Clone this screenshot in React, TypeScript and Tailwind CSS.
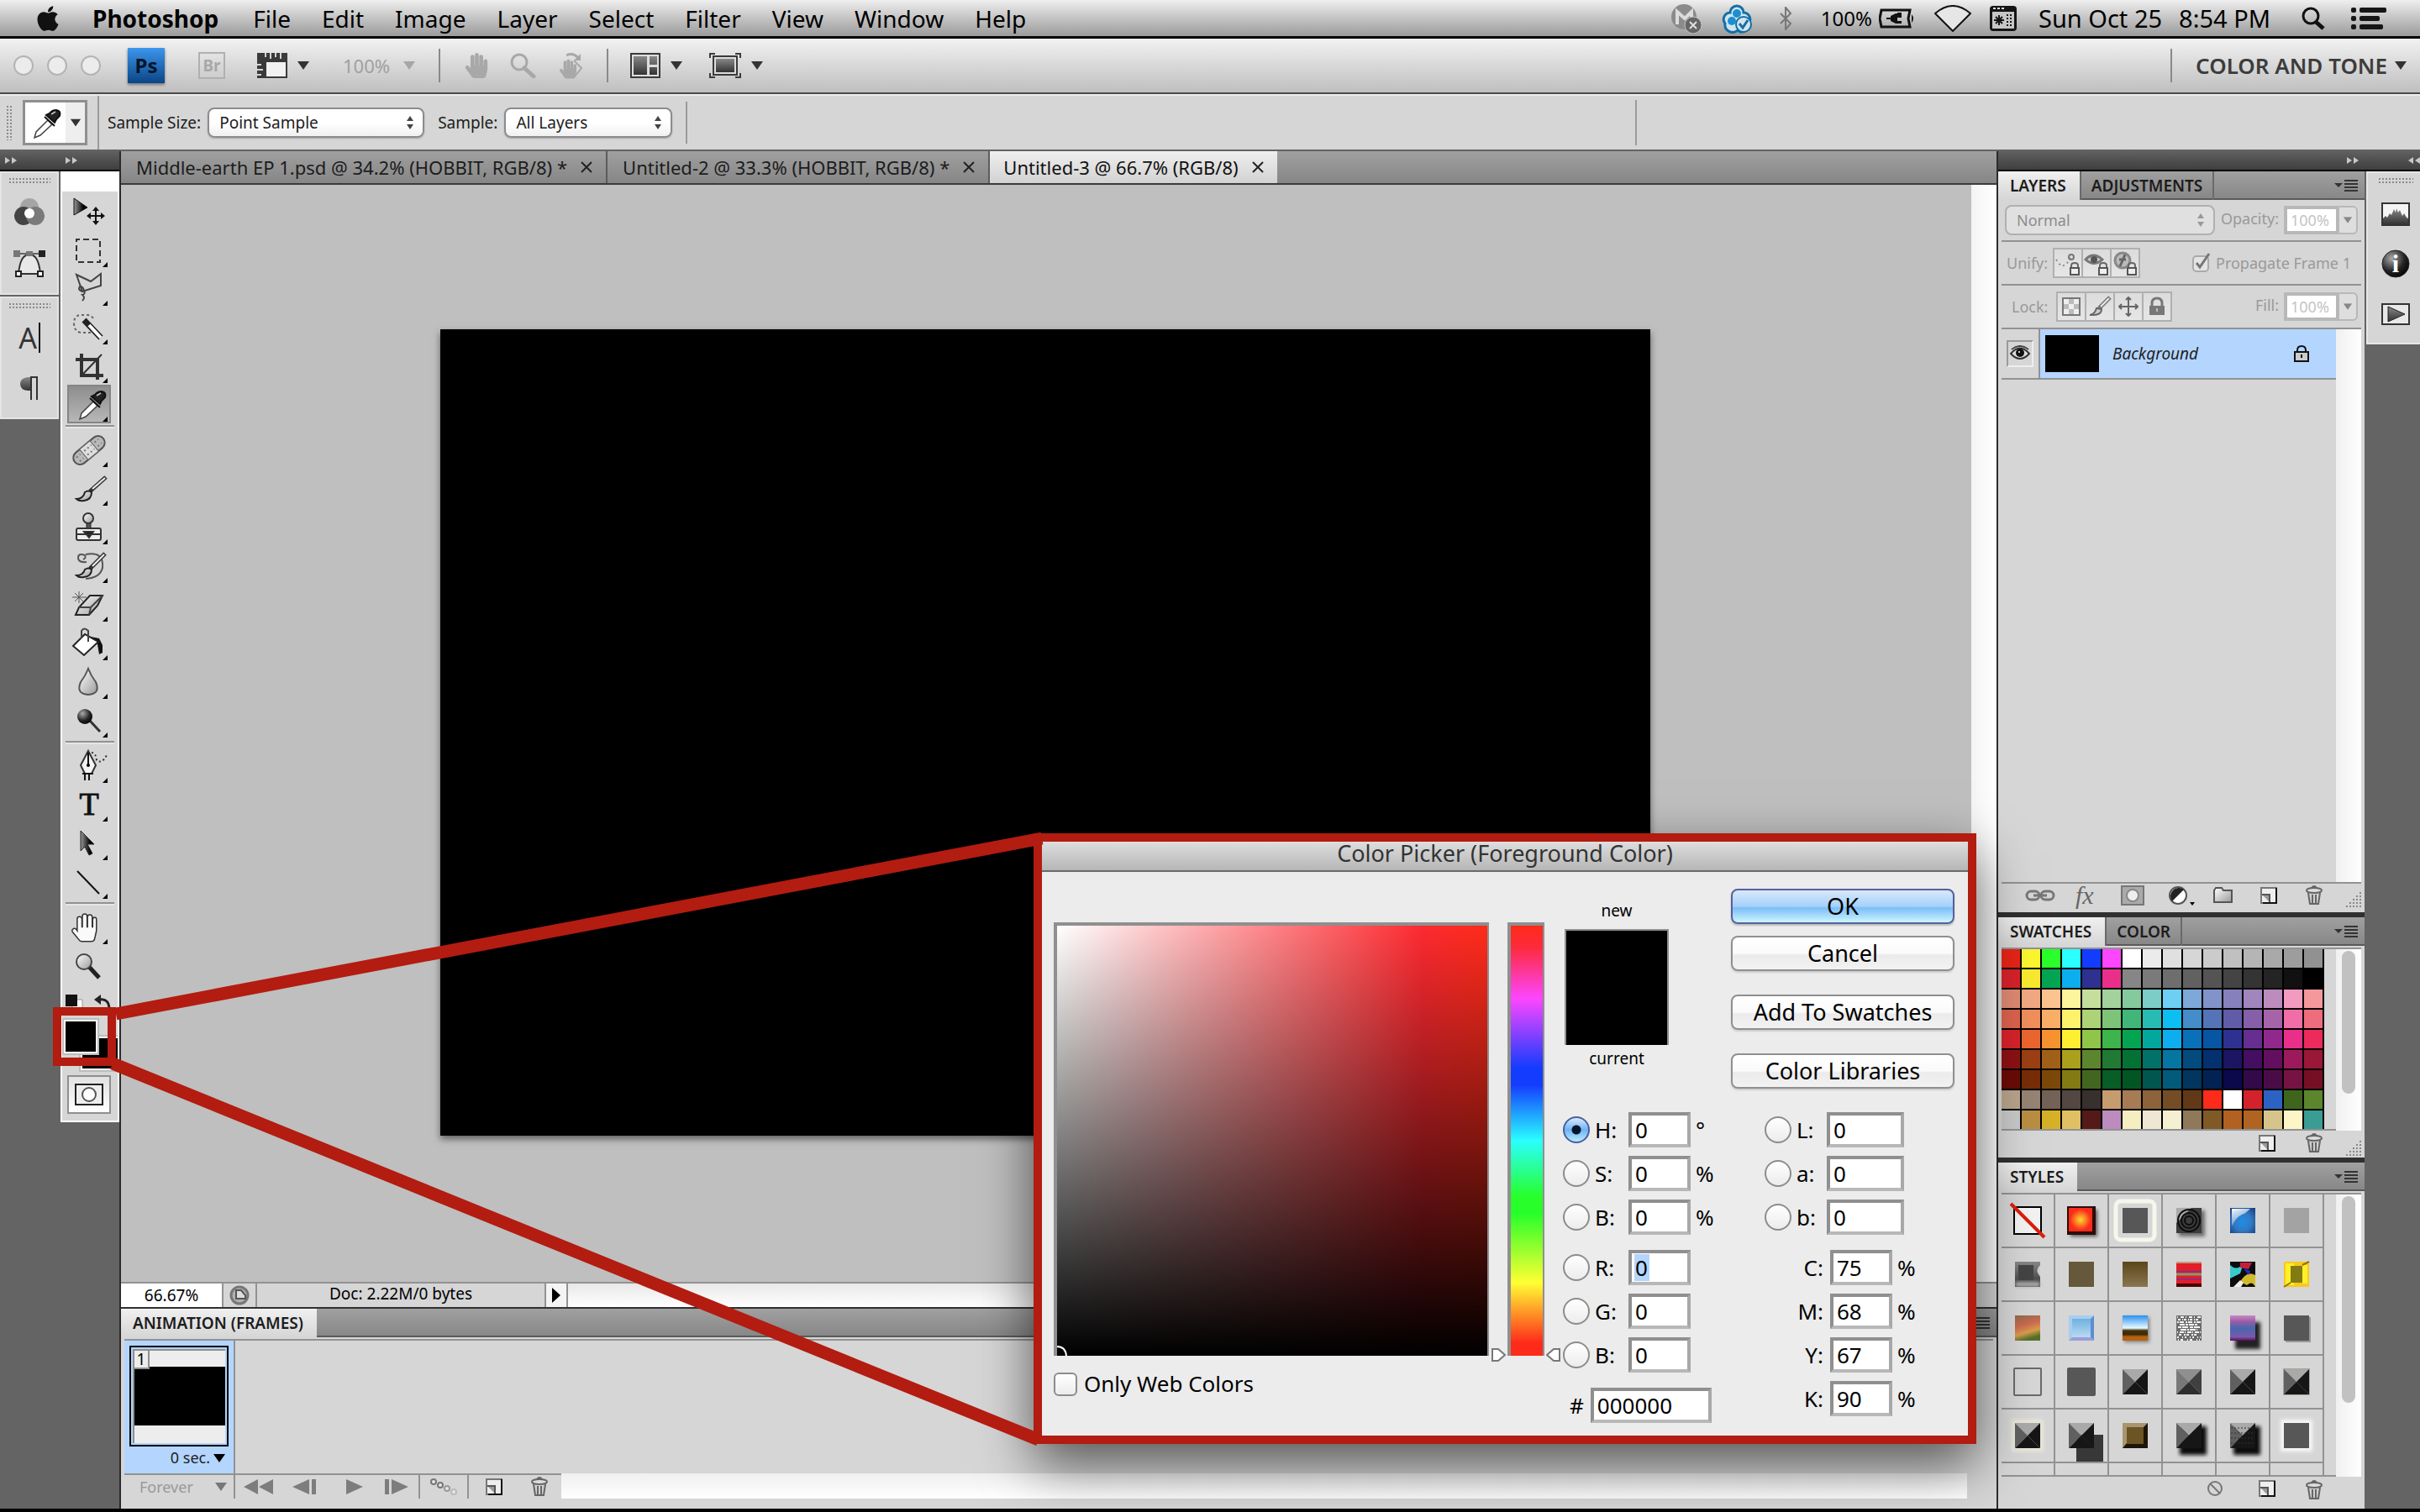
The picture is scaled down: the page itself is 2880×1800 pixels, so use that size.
import type { ReactNode } from "react";
import { FaApple, FaHandPaper } from "react-icons/fa";

const menus = ["File", "Edit", "Image", "Layer", "Select", "Filter", "View", "Window", "Help"];

const documents = [
  { name: "Middle-earth EP 1.psd @ 34.2% (HOBBIT, RGB/8) *", active: false },
  { name: "Untitled-2 @ 33.3% (HOBBIT, RGB/8) *", active: false },
  { name: "Untitled-3 @ 66.7% (RGB/8)", active: true },
];

const swatches = [
  ["#e82517", "#fbf531", "#2aff2b", "#2bffff", "#143cff", "#fd46ff", "#ffffff", "#ebebeb", "#e0e0e0", "#d6d6d6", "#cbcbcb", "#c0c0c0", "#b5b5b5", "#a9a9a9", "#9d9d9d", "#919191"],
  ["#d8222a", "#f8e92f", "#04a552", "#0daeef", "#2e3190", "#ea2f8b", "#868686", "#7a7a7a", "#6e6e6e", "#616161", "#545454", "#444444", "#343434", "#242424", "#111111", "#000000"],
  ["#df8a73", "#f0a983", "#fbc48e", "#fef49c", "#c4df9c", "#a3d39c", "#84ca9d", "#7cccc7", "#6ecff5", "#7ea8d8", "#8293ca", "#8681bc", "#a085be", "#bc8cbf", "#f39ac1", "#f4989c"],
  ["#dd634d", "#f08e5c", "#f9ad66", "#fef26c", "#acd376", "#7dc479", "#40b779", "#28bbb3", "#0cbef1", "#458dca", "#5574b8", "#605ca7", "#855fa8", "#a763a8", "#f06da8", "#ef6c7d"],
  ["#d8222a", "#ec652f", "#f6932f", "#fef031", "#8fc649", "#3eb44c", "#04a552", "#02a89e", "#0daeef", "#0971ba", "#0756a4", "#2e3190", "#652e90", "#91288e", "#ea2f8b", "#ec2a5b"],
  ["#8c1114", "#9c3f14", "#a16018", "#aaa01c", "#5c862d", "#207a33", "#047135", "#027168", "#0576a2", "#034b7e", "#03316f", "#1b1562", "#440e61", "#620f5f", "#9c195c", "#9b1738"],
  ["#690b06", "#762d08", "#7b4809", "#837a14", "#42661f", "#085e26", "#025624", "#01564e", "#035a7b", "#02365e", "#022253", "#0b084b", "#320a48", "#4a0c47", "#771344", "#770f24"],
  ["#b8a48c", "#958373", "#736257", "#534741", "#37302d", "#c69c6e", "#a67c55", "#8c633b", "#744d27", "#613917", "#fe2b1b", "#ffffff", "#d4222c", "#2d62c5", "#3f651d", "#5c862d"],
  ["#c9c9c9", "#b98e42", "#d6b128", "#dfc164", "#541919", "#bc8cbf", "#f6eec1", "#ede7d4", "#f6f0d2", "#90795a", "#7f5a27", "#b16122", "#b16422", "#d6c48a", "#fdf5c5", "#3a9d93"],
];

/* Shared gradients used by the drawings below. */
function Defs() {
  return (
    <svg className="absolute h-0 w-0" aria-hidden="true">
      <defs>
        <linearGradient id="steel" x1="0" y1="0" x2="1" y2="1">
          <stop offset="0" stopColor="#ffffff" />
          <stop offset="1" stopColor="#9a9a9a" />
        </linearGradient>
        <linearGradient id="dark" x1="0" y1="0" x2="0" y2="1">
          <stop offset="0" stopColor="#888888" />
          <stop offset="1" stopColor="#333333" />
        </linearGradient>
        <linearGradient id="darkX" x1="0" y1="0" x2="1" y2="0">
          <stop offset="0" stopColor="#999999" />
          <stop offset="0.7" stopColor="#000000" />
        </linearGradient>
        <radialGradient id="ball" cx="0.35" cy="0.3" r="0.8">
          <stop offset="0" stopColor="#aaaaaa" />
          <stop offset="0.6" stopColor="#222222" />
          <stop offset="1" stopColor="#000000" />
        </radialGradient>
        <radialGradient id="fire">
          <stop offset="0" stopColor="#ffd92e" />
          <stop offset="0.9" stopColor="#fb2a1a" />
        </radialGradient>
        <radialGradient id="gem" cx="0.5" cy="0.55" r="0.7">
          <stop offset="0" stopColor="#1c8fe4" />
          <stop offset="0.5" stopColor="#3279c4" />
          <stop offset="1" stopColor="#16407e" />
        </radialGradient>
        <linearGradient id="shine" x1="0" y1="0" x2="0.5" y2="1">
          <stop offset="0" stopColor="#ffffff" />
          <stop offset="1" stopColor="#ffffff" stopOpacity="0.1" />
        </linearGradient>
        <linearGradient id="brown" x1="0" y1="0" x2="0" y2="1">
          <stop offset="0" stopColor="#5b451a" />
          <stop offset="1" stopColor="#8a7750" />
        </linearGradient>
        <linearGradient id="sunset" x1="0" y1="0" x2="0.3" y2="1">
          <stop offset="0" stopColor="#8d6a4a" />
          <stop offset="0.45" stopColor="#cb6a50" />
          <stop offset="0.75" stopColor="#d89c4c" />
          <stop offset="1" stopColor="#56702a" />
        </linearGradient>
        <linearGradient id="ice" x1="0" y1="0" x2="0" y2="1">
          <stop offset="0" stopColor="#6fb1e0" />
          <stop offset="1" stopColor="#b9d9f2" />
        </linearGradient>
        <linearGradient id="chrome" x1="0" y1="0" x2="0" y2="1">
          <stop offset="0" stopColor="#2a8ff0" />
          <stop offset="0.5" stopColor="#e9fbff" />
          <stop offset="0.6" stopColor="#45340e" />
          <stop offset="0.75" stopColor="#3c2a08" />
          <stop offset="0.85" stopColor="#b7620f" />
          <stop offset="1" stopColor="#b7620f" />
        </linearGradient>
        <linearGradient id="violet" x1="0" y1="0" x2="0" y2="1">
          <stop offset="0" stopColor="#c58ac4" />
          <stop offset="0.25" stopColor="#9b5aa6" />
          <stop offset="0.5" stopColor="#4668ac" />
          <stop offset="0.85" stopColor="#7a58ac" />
          <stop offset="1" stopColor="#5a0c58" />
        </linearGradient>
        <filter id="soft" x="-50%" y="-50%" width="200%" height="200%">
          <feGaussianBlur stdDeviation="2" />
        </filter>
      </defs>
    </svg>
  );
}

function Caret({ className = "text-[#333]" }: { className?: string }) {
  return (
    <svg className={`h-[10px] w-[14px] shrink-0 ${className}`} viewBox="0 0 14 10" fill="currentColor">
      <path d="M0 0h14L7 10z" />
    </svg>
  );
}

function UpDown({ className }: { className: string }) {
  return (
    <svg className={`pointer-events-none absolute right-3 top-[10px] h-4 w-[10px] ${className}`} viewBox="0 0 10 16" fill="currentColor">
      <path d="M5 0l4 6H1zM5 16l4-6H1z" />
    </svg>
  );
}

function Chevrons({ left = false }: { left?: boolean }) {
  return (
    <svg className="h-2 w-[14px] text-[#c8c8c8]" viewBox="0 0 14 8" fill="currentColor">
      <path d={left ? "M6 0v8L0 4zM14 0v8L8 4z" : "M0 0v8l6-4zM8 0v8l6-4z"} />
    </svg>
  );
}

function Grip() {
  return <div className="mx-2 h-2 bg-[radial-gradient(#8a8a8a_1px,transparent_1px)] bg-[length:4px_4px]" />;
}

function MenuBar() {
  return (
    <header className="flex h-[46px] items-center border-b-[3px] border-black bg-linear-to-b from-[#efefef] to-[#9b9b9b] pl-10 pr-10 text-[28px] text-black">
      <FaApple className="size-[34px] text-[#111]" />
      <nav className="ml-9 flex items-center gap-[37px]">
        <button className="mr-1 font-bold">Photoshop</button>
        {menus.map((m) => (
          <button key={m}>{m}</button>
        ))}
      </nav>
      <div className="ml-auto flex items-center">
        <svg className="h-9 w-9" viewBox="0 0 36 36">
          <circle cx="15" cy="16" r="15" fill="#8b8b8b" />
          <path d="M7 25V10l9 8 8-8v6" fill="none" stroke="#dcdcdc" strokeWidth="4" />
          <circle cx="26" cy="26" r="10" fill="#666" stroke="#c4c4c4" strokeWidth="1" />
          <path d="M22 22l8 8M30 22l-8 8" stroke="#e0e0e0" strokeWidth="2" />
        </svg>
        <svg className="ml-6 h-9 w-9" viewBox="0 0 36 36" fill="#d3e4ef" stroke="#146fa6" strokeWidth="3">
          <path d="M10 11a8 8 0 0 1 16 0a8 8 0 0 1 6 13a8 8 0 0 1-13 8a9 9 0 0 1-15-8a8 8 0 0 1 6-13z" />
          <circle cx="18" cy="12" r="5" fill="#1b8fd0" stroke="none" />
          <circle cx="12" cy="21" r="5" fill="#1b8fd0" stroke="none" />
          <circle cx="26" cy="25" r="9" strokeWidth="2" />
          <path d="M21 24l4 5 6-9" fill="none" />
        </svg>
        <svg className="ml-8 h-7 w-4" viewBox="0 0 16 28" fill="none" stroke="#777" strokeWidth="2">
          <path d="M2 8l12 12-6 7V1l6 7L2 20" />
        </svg>
        <span className="ml-[34px] text-[24px]">100%</span>
        <svg className="ml-2 h-6 w-[42px]" viewBox="0 0 42 24">
          <path d="M3 2h34l-2 10 2 10H3l-2-10z" fill="none" stroke="#111" strokeWidth="3" />
          <path d="M9 11h5V9l6-3h2V5h5v3h-5v1-1h5v3h-5v4h5v3h-7l-6-3v-2H9z" fill="#111" />
          <path d="M39 7q4 5 0 10z" fill="#111" />
        </svg>
        <svg className="ml-6 h-8 w-11" viewBox="0 0 44 32" fill="#e6e6e6" stroke="#111" strokeWidth="2">
          <path d="M1 10Q22-8 43 10L22 31z" />
        </svg>
        <svg className="ml-[22px] h-[30px] w-8" viewBox="0 0 32 30">
          <rect width="32" height="30" rx="4" fill="#151515" />
          <path d="M4 3h3M9 3h3M14 3h3" stroke="#ddd" strokeWidth="2" />
          <rect x="3" y="7" width="26" height="20" fill="#c6c6c6" />
          <path d="M11 11v12M5 17h12M7 13l8 8M15 13l-8 8" stroke="#151515" strokeWidth="2" />
          <path d="M21 10v14M25 10v14" stroke="#151515" strokeWidth="2" strokeDasharray="2 2" />
        </svg>
        <span className="ml-[26px] text-[29px]">Sun Oct 25</span>
        <span className="ml-5 text-[29px]">8:54 PM</span>
        <svg className="ml-9 h-7 w-[30px]" viewBox="0 0 30 28" fill="none" stroke="#111">
          <circle cx="12" cy="11" r="9" strokeWidth="3" />
          <path d="M18 18l9 8" strokeWidth="5" />
        </svg>
        <svg className="ml-[30px] h-[26px] w-[42px]" viewBox="0 0 42 26" fill="#151515">
          <rect width="6" height="6" rx="2" />
          <rect y="10" width="6" height="6" rx="2" />
          <rect y="20" width="6" height="6" rx="2" />
          <rect x="10" width="32" height="6" rx="2" />
          <rect x="10" y="10" width="24" height="6" rx="2" />
          <rect x="10" y="20" width="28" height="6" rx="2" />
        </svg>
      </div>
    </header>
  );
}

function BarDivider() {
  return <div className="h-10 w-[2px] bg-[#8a8a8a]" />;
}

function AppBar() {
  return (
    <div className="flex h-[66px] items-center border-b-2 border-[#4a4a4a] bg-linear-to-b from-[#f2f2f2] to-[#bfbfbf] pl-4 pr-4">
      <div className="flex gap-4">
        {["Close", "Minimize", "Zoom"].map((n) => (
          <button key={n} aria-label={n} className="size-6 rounded-full border-2 border-[#b4b4b4] bg-[#ececec]" />
        ))}
      </div>
      <div className="ml-8 flex h-[42px] w-11 items-center justify-center bg-linear-to-b from-[#3d97ee] to-[#0a4586] text-[24px] font-bold text-[#04152b] shadow-[0_2px_3px_#777]">Ps</div>
      <button className="ml-10 flex h-8 w-8 items-center justify-center border-2 border-[#b0b0b0] text-[19px] font-bold text-[#a8a8a8]">Br</button>
      <button aria-label="View extras" className="ml-[38px] flex items-center gap-3">
        <svg className="h-[30px] w-9" viewBox="0 0 36 30">
          <path d="M0 0h36v10H10v20H0z" fill="#3a3a3a" />
          <path d="M10 10h25v19H10z" fill="#f2f2f2" stroke="#3a3a3a" strokeWidth="2" />
          <path d="M10 0v5M16 0v7M22 0v5M28 0v7M0 14h5M0 20h7M0 26h5" stroke="#d4d4d4" strokeWidth="2" />
        </svg>
        <Caret />
      </button>
      <button className="ml-10 mr-7 flex items-center gap-4 text-[22px] text-[#a0a0a0]">
        100% <Caret className="text-[#a6a6a6]" />
      </button>
      <BarDivider />
      <div className="ml-7 mr-6 flex items-center gap-6 text-[#a8a8a8]">
        <button aria-label="Hand tool">
          <FaHandPaper className="h-[30px] w-[30px]" />
        </button>
        <button aria-label="Zoom tool">
          <svg className="h-[30px] w-8" viewBox="0 0 32 30" fill="none" stroke="currentColor">
            <circle cx="12" cy="11" r="9" strokeWidth="3" />
            <path d="M18 18l11 10" strokeWidth="5" strokeLinecap="round" />
          </svg>
        </button>
        <button aria-label="Rotate view" className="mx-1 flex items-end">
          <FaHandPaper className="h-6 w-5" />
          <svg className="-ml-3 h-8 w-5" viewBox="0 0 20 32" fill="none" stroke="currentColor" strokeWidth="2">
            <path d="M0 4q8-4 14 3" strokeWidth="3" />
            <path d="M17 2v8H9z" fill="currentColor" stroke="none" />
            <path d="M9 10l9 9-8 10" />
          </svg>
        </button>
      </div>
      <BarDivider />
      <button aria-label="Arrange documents" className="ml-[26px] flex items-center gap-3">
        <svg className="h-[30px] w-9" viewBox="0 0 36 30">
          <rect x="1" y="1" width="34" height="28" fill="#ddd" stroke="#3a3a3a" strokeWidth="2" />
          <path d="M4 4h16v22H4zM23 4h9v10h-9zM23 17h9v9h-9z" fill="url(#dark)" />
        </svg>
        <Caret />
      </button>
      <button aria-label="Screen mode" className="ml-8 flex items-center gap-3">
        <svg className="h-[30px] w-[38px]" viewBox="0 0 38 30">
          <path d="M1 6V1h6M31 1h6v5M37 24v5h-6M7 29H1v-5" fill="none" stroke="#3a3a3a" strokeWidth="2" />
          <rect x="5" y="4" width="28" height="22" fill="#ddd" stroke="#3a3a3a" strokeWidth="2" />
          <rect x="8" y="7" width="22" height="16" fill="url(#dark)" />
        </svg>
        <Caret />
      </button>
      <div className="ml-auto flex items-center">
        <BarDivider />
        <button className="ml-7 flex items-center gap-[9px] text-[26px] font-semibold text-[#3c3c3c]">
          COLOR AND TONE <Caret />
        </button>
      </div>
    </div>
  );
}

function Dropper() {
  return (
    <>
      <path d="M15 41l2-7 14-14 5 5-14 13z" fill="#fff" stroke="#444" strokeWidth="1.5" />
      <path d="M27 16l12 11M29 14l10 9 2-4 4-4q2-6-4-7-5 0-8 4z" fill="#222" stroke="#111" strokeWidth="2" />
      <path d="M35 13l5-3" stroke="#bbb" strokeWidth="2" />
    </>
  );
}

function OptionsBar() {
  return (
    <div className="flex h-[68px] items-center border-y-2 border-t-[#ececec] border-b-[#636363] bg-[#d6d6d6] pl-[7px] text-[19px] text-[#1c1c1c]">
      <div className="h-[42px] w-2 bg-[radial-gradient(#8a8a8a_1px,transparent_1px)] bg-[length:4px_4px]" />
      <button aria-label="Eyedropper presets" className="ml-3 flex h-[54px] w-[77px] items-center border-[3px] border-[#8f8f8f] bg-white">
        <svg className="-ml-1 h-[46px] w-[52px]" viewBox="0 0 52 46">
          <Dropper />
        </svg>
        <div className="flex h-full w-5 flex-1 items-center justify-center bg-[#eee]">
          <Caret className="scale-90 text-[#333]" />
        </div>
      </button>
      <div className="ml-3 h-full w-[2px] bg-[#9b9b9b]" />
      <label htmlFor="sample-size" className="ml-[10px]">Sample Size:</label>
      <div className="relative ml-2">
        <select id="sample-size" className="h-9 w-[258px] appearance-none rounded-lg border-2 border-[#8c8c8c] bg-linear-to-b from-white from-50% to-[#f0f0f0] pl-3 shadow-[0_1px_2px_#aaa]">
          <option>Point Sample</option>
        </select>
        <UpDown className="text-[#444]" />
      </div>
      <label htmlFor="sample" className="ml-4">Sample:</label>
      <div className="relative ml-2">
        <select id="sample" className="h-9 w-[200px] appearance-none rounded-lg border-2 border-[#8c8c8c] bg-linear-to-b from-white from-50% to-[#f0f0f0] pl-3 shadow-[0_1px_2px_#aaa]">
          <option>All Layers</option>
        </select>
        <UpDown className="text-[#444]" />
      </div>
      <div className="ml-4 h-[50px] w-[2px] bg-[#9b9b9b]" />
      <div className="ml-auto mr-[932px] h-[54px] w-[2px] bg-[#9b9b9b]" />
    </div>
  );
}

type Tool = { name: string; art: ReactNode; flyout?: boolean; selected?: boolean };

const toolGroups: Tool[][] = [
  [
    {
      name: "Move",
      flyout: false,
      art: (
        <>
          <path d="M8 8l16 11L8 28z" fill="url(#darkX)" stroke="#111" />
          <path d="M34 20v18M25 29h18" stroke="#111" strokeWidth="2" />
          <path d="M34 18l4 5h-8zM34 40l4-5h-8zM23 29l5-4v8zM45 29l-5-4v8z" fill="#111" />
        </>
      ),
    },
    { name: "Marquee", art: <path d="M11 11h28v27H11z" fill="none" stroke="#333" strokeWidth="2" strokeDasharray="7 4" strokeDashoffset="3" /> },
    {
      name: "Lasso",
      art: <path d="M11 7l17 8 12-9v14l-22 7zM18 27q-6-2-3-6 4 0 5 5 2 4-2 5 4 3 0 7" fill="none" stroke="#444" strokeWidth="2" />,
    },
    {
      name: "Quick Selection",
      art: (
        <>
          <path d="M28 30H16q-8-2-8-11 0-10 9-10h8q4 1 6 4" fill="none" stroke="#666" strokeWidth="2" strokeDasharray="3 3" />
          <path d="M20 15l20 21" stroke="#222" strokeWidth="7" />
          <path d="M26 21l14 15" stroke="#fff" strokeWidth="4" />
        </>
      ),
    },
    {
      name: "Crop",
      art: (
        <>
          <path d="M17 9v26h26M10 16h26v24" fill="none" stroke="#333" strokeWidth="4" />
          <path d="M19 33L41 10" stroke="#333" strokeWidth="2" />
        </>
      ),
    },
    { name: "Eyedropper", selected: true, art: <Dropper /> },
  ],
  [
    {
      name: "Healing Brush",
      art: (
        <g transform="rotate(-40 26 24)">
          <rect x="4" y="16" width="44" height="16" rx="8" fill="#b9b9b9" stroke="#555" strokeWidth="2" />
          <path d="M18 16h16v16H18z" fill="#dedede" stroke="#666" />
          <path d="M9 21h6M9 27h6M21 21h11M21 27h11M37 21h6M37 27h6" stroke="#777" strokeWidth="2" strokeDasharray="2 3" />
        </g>
      ),
    },
    {
      name: "Brush",
      art: (
        <>
          <path d="M27 27L46 10" stroke="#333" strokeWidth="5" />
          <path d="M30 24L45 11" stroke="#eee" strokeWidth="2" />
          <path d="M11 36q8 0 10-8 4-3 8 0 0 9-9 10-6 1-9-2z" fill="url(#steel)" stroke="#222" strokeWidth="2" />
        </>
      ),
    },
    {
      name: "Clone Stamp",
      art: (
        <>
          <path d="M23 16h5v10h-5z" fill="#555" stroke="#222" />
          <circle cx="25" cy="13" r="6" fill="url(#steel)" stroke="#333" strokeWidth="2" />
          <rect x="11" y="25" width="29" height="14" rx="2" fill="#eee" stroke="#333" strokeWidth="2" />
          <path d="M11 32h29M20 29h11l-5 7z" fill="#111" stroke="#333" strokeWidth="2" />
        </>
      ),
    },
    {
      name: "History Brush",
      art: (
        <>
          <path d="M19 16q4-2 2-5-8-3-8 3 0 6 10 5M22 10q22-4 20 16-3 12-20 13" fill="none" stroke="#555" strokeWidth="2" />
          <path d="M27 27L45 9" stroke="#333" strokeWidth="5" />
          <path d="M30 24L44 10" stroke="#eee" strokeWidth="2" />
          <path d="M11 35q8 0 10-7 4-3 8 0 0 8-9 9-6 1-9-2z" fill="url(#steel)" stroke="#222" strokeWidth="2" />
        </>
      ),
    },
    {
      name: "Eraser",
      art: (
        <>
          <path d="M10 36l4-9 13-14h15l-6 12-10 11z" fill="url(#steel)" stroke="#222" strokeWidth="2" />
          <path d="M14 27h14l14-14M28 27l-2 9" fill="none" stroke="#444" strokeWidth="2" />
          <path d="M6 15h17M14 8v14M9 10l10 10M19 10L9 20" stroke="#555" />
        </>
      ),
    },
    {
      name: "Paint Bucket",
      art: (
        <>
          <path d="M38 18l4 8v9l-4 2-2-12-8-9z" fill="#111" />
          <path d="M7 27l14-14 16 9-17 16z" fill="#fff" stroke="#222" strokeWidth="2" />
          <path d="M17 18V9q3-5 8 0v13" fill="none" stroke="#444" strokeWidth="2" />
        </>
      ),
    },
    { name: "Blur", art: <path d="M25 8q3 8 9 16 6 14-9 15-15-1-9-15 6-8 9-16z" fill="url(#steel)" stroke="#555" strokeWidth="2" /> },
    {
      name: "Dodge",
      art: (
        <>
          <path d="M27 24l12 13" stroke="#333" strokeWidth="3" />
          <circle cx="21" cy="19" r="9" fill="url(#ball)" />
        </>
      ),
    },
  ],
  [
    {
      name: "Pen",
      art: (
        <>
          <path d="M25 6l9 17-5 10h-8l-5-10z" fill="#f4f4f4" stroke="#333" strokeWidth="2" />
          <path d="M25 8v14M18 33h13M21 34v7M26 34v7" stroke="#111" strokeWidth="2" />
          <circle cx="25" cy="23" r="2" fill="#000" />
          <path d="M29 8q5 0 6 9 6 5 12-6" fill="none" stroke="#333" strokeWidth="2" strokeDasharray="2 3" />
        </>
      ),
    },
    {
      name: "Type",
      art: (
        <text x="26" y="36" textAnchor="middle" stroke="#111" className="fill-[#111] font-['Liberation_Serif',serif] text-[38px]">
          T
        </text>
      ),
    },
    { name: "Path Selection", art: <path d="M16 9l16 16h-8l6 11-4 2-5-10-5 5z" fill="url(#darkX)" stroke="#222" /> },
    { name: "Line", art: <path d="M12 11l26 27" stroke="#111" strokeWidth="2" /> },
  ],
  [
    {
      name: "Hand",
      art: (
        <g transform="translate(7 8) scale(0.064)">
          <path
            d="M408 64c-26 2-44 20-44 42v134h-8V58c0-20-14-44-44-44s-44 24-44 44v182h-8V44c0-22-16-44-44-44s-44 20-44 44v196h-8V94c0-24-20-44-44-44s-44 20-44 44v220l-18-26c-14-20-40-24-58-10-20 14-24 40-10 58l124 150c10 16 26 26 46 26h178c30 0 56-20 62-50l30-130c2-8 4-18 4-28V106c0-26-14-44-30-42z"
            fill="#fafafa"
            stroke="#333"
            strokeWidth="24"
          />
        </g>
      ),
    },
    {
      name: "Zoom",
      flyout: false,
      art: (
        <>
          <path d="M26 25l12 13" stroke="#222" strokeWidth="5" />
          <circle cx="20" cy="19" r="9" fill="url(#steel)" stroke="#444" strokeWidth="2" />
        </>
      ),
    },
  ],
];

function Toolbox() {
  return (
    <div className="w-[70px] self-start border-2 border-t-[24px] border-white bg-[#d6d6d6]">
      {toolGroups.map((group, i) => (
        <div key={i}>
          {i > 0 && <div className="mx-1 my-[2px] h-1 border-t-2 border-[#929292] bg-[#e6e6e6]" />}
          {group.map((tool) => (
            <button
              key={tool.name}
              aria-label={tool.name}
              className={
                tool.selected
                  ? "ml-[6px] flex h-[46px] w-[52px] bg-linear-to-b from-[#8c8c8c] to-[#b9b9b9] outline-2 -outline-offset-2 outline-[#858585]"
                  : "ml-[6px] flex h-[46px] w-[52px]"
              }
            >
              <svg viewBox="0 0 52 46" fill="none" className="h-[46px] w-[52px]">
                {tool.art}
                {tool.flyout !== false && <path d="M48 38v6h-6z" fill="#000" />}
              </svg>
            </button>
          ))}
        </div>
      ))}
      <div className="relative h-[108px] overflow-hidden">
        <svg className="absolute left-1 top-3 h-5 w-14" viewBox="0 0 56 20">
          <path d="M8 6h12v14H8z" fill="#fff" stroke="#999" />
          <path d="M0 0h14v14H0z" fill="#111" />
          <path d="M40 6q12-2 12 12" fill="none" stroke="#222" strokeWidth="3" />
          <path d="M34 6l8-6v12z" fill="#222" />
        </svg>
        <button aria-label="Background color" className="absolute left-[22px] top-[62px] h-10 w-12 border-2 border-white bg-black outline-2 outline-[#bdbdbd]" />
        <button aria-label="Foreground color" className="absolute left-[2px] top-[42px] h-10 w-10 border-2 border-white bg-black outline-2 outline-[#bdbdbd]" />
      </div>
      <button aria-label="Quick mask" className="mb-2 ml-[6px] flex h-[46px] w-[52px] items-center justify-center border-2 border-[#8f8f8f] bg-linear-to-b from-[#e2e2e2] to-white">
        <svg className="h-[26px] w-[34px]" viewBox="0 0 34 26">
          <rect x="1" y="1" width="32" height="24" fill="#eee" stroke="#222" strokeWidth="2" />
          <circle cx="17" cy="13" r="8" fill="#fff" stroke="#555" strokeWidth="2" />
        </svg>
      </button>
    </div>
  );
}

function LeftDock() {
  return (
    <aside className="flex w-36 shrink-0 flex-col border-r-2 border-[#2b2b2b] bg-[#646464]">
      <div className="flex h-6 items-center gap-[58px] border-b-2 border-black bg-linear-to-b from-[#606060] to-[#3f3f3f] pl-[6px]">
        <Chevrons />
        <Chevrons />
      </div>
      <div className="flex">
        <div className="w-[72px] shrink-0 pr-[2px]">
          <div className="flex h-[147px] flex-col border-2 border-[#e4e4e4] bg-[#d6d6d6] pt-[5px]">
            <Grip />
            <button aria-label="Channels" className="mx-auto mt-4">
              <svg className="h-[34px] w-9" viewBox="0 0 36 34">
                <circle cx="18" cy="12" r="11" fill="#a5a5a5" />
                <circle cx="11" cy="22" r="11" fill="#444" />
                <circle cx="25" cy="22" r="11" fill="#7a7a7a" />
                <circle cx="18" cy="19" r="6" fill="#fff" />
              </svg>
            </button>
            <button aria-label="Paths" className="mx-auto mt-7">
              <svg className="h-[34px] w-[38px]" viewBox="0 0 38 34">
                <path d="M6 29Q8 6 19 6t13 23z" fill="#e8e8e8" stroke="#333" strokeWidth="2" />
                <path d="M0 5h38" stroke="#666" strokeWidth="2" />
                <path d="M0 1h8v8H0zM15 2h8v6h-8z" fill="#777" />
                <path d="M30 1h8v8h-8z" fill="#222" />
                <path d="M3 26h6v6H3zM29 26h6v6h-6z" fill="#fff" stroke="#222" strokeWidth="2" />
              </svg>
            </button>
          </div>
          <div className="mt-[2px] flex h-[146px] flex-col border-2 border-[#e4e4e4] bg-[#d6d6d6] pt-[5px]">
            <Grip />
            <button aria-label="Character" className="mx-auto mt-4 flex items-center text-[34px] leading-9 text-[#333]">
              A<span className="ml-[2px] h-9 w-[2px] bg-[#111]" />
            </button>
            <button aria-label="Paragraph" className="mx-auto mt-7">
              <svg className="h-7 w-[22px]" viewBox="0 0 22 28">
                <path d="M13 1H9q-9 1-9 8t9 8h4z" fill="url(#dark)" />
                <path d="M13 28V1h7v27" fill="none" stroke="#333" strokeWidth="2" />
              </svg>
            </button>
          </div>
        </div>
        <Toolbox />
      </div>
    </aside>
  );
}

function PanelMenuIcon() {
  return (
    <svg className="ml-auto mr-2 h-[14px] w-7" viewBox="0 0 28 14">
      <path d="M0 4h10L5 9z" fill="#333" />
      <path d="M12 1h16M12 5h16M12 9h16M12 13h16" stroke="#333" strokeWidth="2" />
    </svg>
  );
}

function PanelTabs({ tabs }: { tabs: string[] }) {
  return (
    <div className="flex h-[34px] shrink-0 items-center bg-linear-to-b from-[#a0a0a0] to-[#868686] text-[19px] font-semibold text-[#1c1c1c] shadow-[inset_0_-2px_#5a5a5a]">
      {tabs.map((t, i) => (
        <button
          key={t}
          className={
            i === 0
              ? "h-full bg-linear-to-b from-[#f0f0f0] to-[#d6d6d6] pl-[14px] pr-4"
              : "h-full border-x-2 border-[#6a6a6a] px-3 shadow-[inset_0_-2px_#5a5a5a]"
          }
        >
          {t}
        </button>
      ))}
      <PanelMenuIcon />
    </div>
  );
}

function NewIcon({ className = "" }: { className?: string }) {
  return (
    <svg className={`h-5 w-5 ${className}`} viewBox="0 0 20 20">
      <path d="M1 1h18v18H1z" fill="#eee" stroke="#777" strokeWidth="2" />
      <path d="M19 1v18H3" fill="none" stroke="#111" strokeWidth="2" />
      <path d="M2 9h9v9" fill="#999" stroke="#555" strokeWidth="2" />
    </svg>
  );
}

function TrashIcon({ className = "" }: { className?: string }) {
  return (
    <svg className={`h-6 w-5 ${className}`} viewBox="0 0 20 24" fill="none" stroke="#666" strokeWidth="2">
      <path d="M3 9l2 13h10l2-13" fill="#d0d0d0" />
      <ellipse cx="10" cy="6" rx="9" ry="3" fill="#ddd" />
      <path d="M7 3q3-4 6 0M8 11v10M12 11v10" />
    </svg>
  );
}

function ResizeGrip() {
  return (
    <svg className="h-[18px] w-[18px] self-end" viewBox="0 0 18 18" fill="#888">
      {[0, 1, 2, 3, 4].flatMap((r) =>
        Array.from({ length: r + 1 }, (_, c) => <rect key={`${r}${c}`} x={16 - c * 4} y={r * 4} width="2" height="2" />),
      )}
    </svg>
  );
}

function PercentField({ id, label }: { id: string; label: string }) {
  return (
    <div className="ml-auto flex items-center gap-[6px]">
      <label htmlFor={id} className="pb-1">{label}</label>
      <div className="flex">
        <input id={id} disabled defaultValue="100%" className="h-[34px] w-[66px] border-4 border-[#b8b8b8] bg-white px-1 text-[#c4c4c4]" />
        <button disabled aria-label={`${label} slider`} className="flex h-[34px] w-[22px] items-center justify-center rounded-r-md border-2 border-l-0 border-[#b8b8b8] bg-[#dedede]">
          <Caret className="scale-75 text-[#888]" />
        </button>
      </div>
    </div>
  );
}

function SmallLock() {
  return (
    <>
      <path d="M20 22v-3q0-3 4-3t4 3v3" fill="none" stroke="#666" strokeWidth="2" />
      <path d="M19 22h10v8H19z" fill="#eee" stroke="#555" strokeWidth="2" />
    </>
  );
}

const iconButton = "-ml-[2px] flex h-9 w-9 items-center justify-center border-2 border-[#b0b0b0] bg-linear-to-b from-[#dcdcdc] to-[#e6e6e6]";

function LayersPanel() {
  return (
    <section className="flex min-h-0 flex-1 flex-col bg-[#d6d6d6] text-[18px] text-[#999]">
      <PanelTabs tabs={["LAYERS", "ADJUSTMENTS"]} />
      <div className="mx-1 flex h-[50px] items-center border-b-2 border-[#929292] pl-1 pr-1">
        <div className="relative">
          <select aria-label="Blend mode" disabled className="h-9 w-[250px] appearance-none rounded-lg border-2 border-[#b0b0b0] bg-[#e0e0e0] pl-3 text-[#8c8c8c] opacity-100">
            <option>Normal</option>
          </select>
          <UpDown className="text-[#999]" />
        </div>
        <PercentField id="opacity" label="Opacity:" />
      </div>
      <div className="mx-1 flex h-[52px] items-center border-b-2 border-[#929292] pl-[6px] pr-3">
        <span className="mr-2">Unify:</span>
        <button disabled aria-label="Unify position" className={iconButton}>
          <svg className="size-8" viewBox="0 0 32 32">
            <path d="M2 12l6 8 6-2 5-8" fill="none" stroke="#888" strokeWidth="2" strokeDasharray="2 4" />
            <circle cx="20" cy="9" r="3" fill="none" stroke="#777" strokeWidth="2" />
            <SmallLock />
          </svg>
        </button>
        <button disabled aria-label="Unify visibility" className={iconButton}>
          <svg className="size-8" viewBox="0 0 32 32">
            <path d="M3 12q9-10 20 0-10 9-20 0z" fill="#ccc" stroke="#777" strokeWidth="3" />
            <circle cx="13" cy="12" r="4" fill="#555" />
            <SmallLock />
          </svg>
        </button>
        <button disabled aria-label="Unify style" className={iconButton}>
          <svg className="size-8" viewBox="0 0 32 32">
            <circle cx="13" cy="13" r="9" fill="#bbb" stroke="#888" strokeWidth="3" />
            <path d="M10 20l6-14M9 12h8" stroke="#666" strokeWidth="3" />
            <SmallLock />
          </svg>
        </button>
        <label className="ml-auto flex items-center gap-[6px]">
          <input type="checkbox" disabled defaultChecked className="peer sr-only" />
          <svg className="h-6 w-[22px]" viewBox="0 0 22 24">
            <rect x="1" y="4" width="18" height="18" rx="4" fill="#e4e4e4" stroke="#aaa" strokeWidth="2" />
            <path d="M5 12l4 5L20 1" fill="none" stroke="#777" strokeWidth="3" />
          </svg>
          Propagate Frame 1
        </label>
      </div>
      <div className="mx-1 flex h-[52px] items-center border-b-2 border-[#929292] pl-3 pr-1">
        <span className="mr-3">Lock:</span>
        <button disabled aria-label="Lock transparency" className={iconButton}>
          <svg className="size-[22px]" viewBox="0 0 22 22">
            <path d="M1 1h20v20H1z" fill="#eee" stroke="#777" strokeWidth="2" />
            <path d="M8 2h6v6H8zM2 8h6v6H2zM14 8h6v6h-6zM8 14h6v6H8z" fill="#bbb" />
          </svg>
        </button>
        <button disabled aria-label="Lock pixels" className={iconButton}>
          <svg className="size-7" viewBox="0 0 28 28">
            <path d="M13 16L26 3" stroke="#777" strokeWidth="5" />
            <path d="M15 14L25 4" stroke="#e8e8e8" strokeWidth="2" />
            <path d="M2 24q6-1 8-8l6 1q0 8-14 7z" fill="#ccc" stroke="#666" strokeWidth="2" />
          </svg>
        </button>
        <button disabled aria-label="Lock position" className={iconButton}>
          <svg className="size-6" viewBox="0 0 24 24" fill="none" stroke="#666" strokeWidth="2">
            <path d="M12 1v22M1 12h22M9 4l3-3 3 3M9 20l3 3 3-3M4 9l-3 3 3 3M20 9l3 3-3 3" />
          </svg>
        </button>
        <button disabled aria-label="Lock all" className={iconButton}>
          <svg className="size-6" viewBox="0 0 24 24">
            <path d="M6 11V8q0-6 6-6t6 6v3" fill="none" stroke="#777" strokeWidth="3" />
            <path d="M3 11h18v11H3z" fill="#777" />
            <path d="M12 14v4" stroke="#bbb" strokeWidth="2" />
          </svg>
        </button>
        <PercentField id="fill" label="Fill:" />
      </div>
      <div className="mx-1 flex min-h-0 flex-1">
        <div className="flex-1">
          <div className="flex h-[60px] border-b-2 border-[#929292]">
            <div className="flex w-[46px] items-center border-r-2 border-[#929292] pl-[6px]">
              <button aria-label="Layer visibility" className="flex size-8 items-center justify-center border-2 border-[#9a9a9a] border-b-[#eee] border-r-[#eee]">
                <svg className="h-5 w-6" viewBox="0 0 24 20">
                  <path d="M1 10q11-13 22 0-11 12-22 0z" fill="#ddd" stroke="#333" strokeWidth="2" />
                  <circle cx="12" cy="9" r="5" fill="#111" />
                  <path d="M2 5q10-8 20 0" fill="none" stroke="#444" strokeWidth="2" />
                  <circle cx="11" cy="8" r="1" fill="#fff" />
                </svg>
              </button>
            </div>
            <div className="flex flex-1 items-center bg-[#b4d5fe] pl-[6px] text-[#222]">
              <div className="h-11 w-16 bg-black" />
              <span className="ml-4 text-[19px] italic">Background</span>
              <svg className="ml-auto mr-[31px] h-[22px] w-5" viewBox="0 0 20 22">
                <path d="M5 9V7q0-5 5-5t5 5v2" fill="none" stroke="#111" strokeWidth="2" />
                <path d="M2 9h16v11H2z" fill="#ccc" stroke="#111" strokeWidth="2" />
                <path d="M10 12v4" stroke="#111" strokeWidth="2" />
              </svg>
            </div>
          </div>
        </div>
        <div className="w-[30px] bg-linear-to-r from-[#f0f0f0] to-white" />
      </div>
      <div className="mx-1 flex h-9 items-center border-t-2 border-[#929292] pb-[6px] pl-7">
        <svg className="h-4 w-9" viewBox="0 0 36 16" fill="none" stroke="#777" strokeWidth="3">
          <rect x="2" y="3" width="15" height="10" rx="5" />
          <rect x="19" y="3" width="15" height="10" rx="5" />
          <path d="M10 8h16" />
        </svg>
        <span className="ml-6 w-8 font-['Liberation_Serif',serif] text-[30px] leading-7 italic text-[#666]">fx</span>
        <svg className="ml-[22px] h-6 w-7" viewBox="0 0 28 24">
          <path d="M1 1h26v22H1z" fill="#aaa" stroke="#777" strokeWidth="2" />
          <circle cx="14" cy="12" r="7" fill="#eee" stroke="#888" strokeWidth="2" />
        </svg>
        <svg className="ml-7 h-6 w-8" viewBox="0 0 32 24">
          <circle cx="12" cy="12" r="10" fill="#fff" stroke="#555" strokeWidth="2" />
          <path d="M5 19A10 10 0 0 1 19 5z" fill="#222" />
          <path d="M26 20h6l-3 4z" fill="#000" />
        </svg>
        <svg className="ml-[22px] h-5 w-[23px]" viewBox="0 0 23 20">
          <path d="M1 18V4l2-3h7l2 3h10v14z" fill="url(#steel)" stroke="#555" strokeWidth="2" />
        </svg>
        <NewIcon className="ml-[33px]" />
        <TrashIcon className="ml-[34px]" />
        <span className="ml-auto flex h-full items-end">
          <ResizeGrip />
        </span>
      </div>
    </section>
  );
}

function SwatchesPanel() {
  return (
    <section className="border-t-[6px] border-[#303030] bg-[#d6d6d6]">
      <PanelTabs tabs={["SWATCHES", "COLOR"]} />
      <div className="mx-1 mt-[2px] flex border-t-2 border-[#929292]">
        <div className="flex-1 border-b-2 border-[#929292]">
          <div className="grid h-[214px] w-96 grid-cols-16 overflow-hidden bg-black">
            {swatches.flat().map((color, i) => (
              <button key={i} aria-label={color} className="mb-[2px] mr-[2px] h-[22px]" style={{ backgroundColor: color }} />
            ))}
          </div>
        </div>
        <div className="flex w-[30px] justify-center bg-linear-to-r from-[#f0f0f0] to-white pt-[2px]">
          <div className="h-[170px] w-4 rounded-full bg-[#c1c1c1]" />
        </div>
      </div>
      <div className="mx-1 flex h-8 items-center justify-end pb-[2px]">
        <NewIcon className="mr-9" />
        <TrashIcon className="mr-7" />
        <ResizeGrip />
      </div>
    </section>
  );
}

/* Four-facet pyramid that most of the bevel presets share. */
function Bevel({ soft = false }: { soft?: boolean }) {
  return (
    <>
      <path d="M16 16h30L31 31z" fill={soft ? "#8f8f8f" : "#a9a9a9"} />
      <path d="M16 16l15 15-15 15z" fill={soft ? "#787878" : "#606060"} />
      <path d="M46 16v30L31 31z" fill={soft ? "#404040" : "#161616"} />
      <path d="M16 46h30L31 31z" fill={soft ? "#2e2e2e" : "#161616"} />
    </>
  );
}

const box = "M16 16h30v30H16z";

const stylePresets: ReactNode[] = [
  <>
    <path d="M15 15h32v32H15z" fill="#f2f2f2" stroke="#000" strokeWidth="2" />
    <path d="M11 11l40 40" stroke="#d8200f" strokeWidth="4" />
  </>,
  <>
    <path d="M18 18h32v32H18z" fill="#000" opacity="0.6" filter="url(#soft)" />
    <path d="M14 14h34v34H14z" fill="#2a0d0a" />
    <path d="M16 16h28v28H16z" fill="url(#fire)" />
  </>,
  <>
    <rect x="8" y="8" width="46" height="46" rx="6" fill="none" stroke="#f6f6ec" strokeWidth="5" />
    <path d={box} fill="#575757" />
  </>,
  <>
    <path d="M19 19h31v31H19z" fill="#000" opacity="0.5" filter="url(#soft)" />
    <path d={box} fill="#3c3c3c" />
    <path d="M16 16h18L16 34z" fill="#aaa" />
    <g fill="none" stroke="#0c0c0c" strokeWidth="2">
      <circle cx="31" cy="31" r="5" />
      <circle cx="31" cy="31" r="9" />
      <circle cx="31" cy="31" r="13" />
    </g>
  </>,
  <>
    <path d={box} fill="url(#gem)" />
    <path d="M18 17h22q-6 6-10 7-6 2-12 14z" fill="url(#shine)" />
  </>,
  <path d={box} fill="#a3a3a3" />,
  <>
    <path d={box} fill="url(#dark)" />
    <path d="M16 40h30v6H16z" fill="#b4b4b4" filter="url(#soft)" />
    <path d="M20 20h18v18H20z" fill="#444" />
    <path d="M46 20q-7 6 0 14z" fill="#ccc" />
  </>,
  <path d={box} fill="#66583a" />,
  <path d={box} fill="url(#brown)" />,
  <>
    <path d={box} fill="#e01f27" />
    <path d="M16 17h30" stroke="#c59b80" strokeWidth="2" />
    <path d="M16 28h30M16 37h30" stroke="#8f2b7c" strokeWidth="2" />
    <path d="M16 31h30" stroke="#8a9a6a" strokeWidth="3" />
    <path d="M16 44h30" stroke="#4a0606" strokeWidth="4" />
  </>,
  <>
    <path d={box} fill="#0c0c0c" />
    <path d="M16 20q8 8 16-2l-4 12-12 6z" fill="#39c9c9" />
    <path d="M28 17h14l-4 8-10-2z" fill="#c4203c" />
    <path d="M28 40q8-14 18-8v14q-4-8-10-2z" fill="#d2b92c" />
    <path d="M32 24l8 3-2 5z" fill="#1b2fd0" />
    <path d="M20 46l8-8 4 3-3 5z" fill="#eee" />
  </>,
  <>
    <path d={box} fill="#f9c81c" />
    <path d="M18 18h10v26H18zM38 20h6v22h-6z" fill="#fff028" />
    <path d="M24 21h14v20H24z" fill="#827b14" />
    <path d="M38 20l8-4M16 46l8-5" stroke="#94700c" strokeWidth="2" />
  </>,
  <path d={box} fill="url(#sunset)" />,
  <>
    <path d={box} fill="#a9cdee" />
    <path d="M46 16v30l-4-4V20z" fill="#5b8ed0" />
    <path d="M16 46h30l-4-4H20z" fill="#9c9ed8" />
    <path d="M20 20h22v22H20z" fill="url(#ice)" />
  </>,
  <>
    <path d="M18 18h30v30H18z" fill="#000" opacity="0.4" filter="url(#soft)" />
    <path d={box} fill="url(#chrome)" />
  </>,
  <>
    <path d={box} fill="#6c6c6c" />
    <g fill="none" stroke="#f4f4f4" strokeWidth="2">
      <path d="M17 18h28" strokeDasharray="1 3 4 2" />
      <path d="M18 21h26" strokeDasharray="3 2 1 1" />
      <path d="M17 24h28" strokeDasharray="2 1 5 2" />
      <path d="M20 27h22" strokeDasharray="6 1 3 1" />
      <path d="M18 30h26" strokeDasharray="4 1 7 2" />
      <path d="M21 33h20" strokeDasharray="7 1 2 1" />
      <path d="M17 36h28" strokeDasharray="1 2 5 1" />
      <path d="M19 39h24" strokeDasharray="3 3 2 1" />
      <path d="M17 42h28" strokeDasharray="2 4 1 2" />
      <path d="M18 45h26" strokeDasharray="1 2 3 5" />
    </g>
  </>,
  <>
    <path d="M22 24h30v32H22z" fill="#222" filter="url(#soft)" />
    <path d={box} fill="url(#violet)" />
  </>,
  <>
    <path d="M18 18h30v30H18z" fill="#999" />
    <path d={box} fill="#575757" />
  </>,
  <rect x="15" y="15" width="32" height="32" rx="1" fill="none" stroke="#6a6a6a" strokeWidth="2" />,
  <rect x="14" y="14" width="34" height="34" rx="2" fill="#575757" />,
  <Bevel />,
  <Bevel soft />,
  <Bevel />,
  <>
    <path d="M15 15h32v32H15z" fill="#a5a599" />
    <Bevel />
  </>,
  <>
    <path d="M12 12h38v38H12z" fill="#f2efdc" opacity="0.7" filter="url(#soft)" />
    <Bevel />
  </>,
  <>
    <path d="M25 30h32v32H25z" fill="#383838" />
    <Bevel />
  </>,
  <>
    <path d={box} fill="#1d1507" />
    <path d="M16 16h30l-5 5H21v19l-5 6z" fill="#a99670" />
    <path d="M21 21h20v20H21z" fill="#6c5424" />
  </>,
  <>
    <path d="M20 20h32v34H20z" fill="#111" filter="url(#soft)" />
    <Bevel />
  </>,
  <>
    <path d="M20 20h32v34H20z" fill="#111" filter="url(#soft)" />
    <Bevel />
    <path d="M17 22h28M17 28h28M17 34h28M17 40h28" stroke="#333" strokeDasharray="2 2" />
  </>,
  <>
    <path d="M12 12h38v38H12z" fill="#fff" opacity="0.8" filter="url(#soft)" />
    <path d={box} fill="#575757" />
  </>,
];

function StylesPanel() {
  return (
    <section className="border-t-[6px] border-[#303030] bg-[#d6d6d6]">
      <PanelTabs tabs={["STYLES"]} />
      <div className="mx-1 mt-[2px] flex border-t-2 border-[#929292]">
        <div className="flex-1 border-b-2 border-[#929292]">
          <div className="grid h-[334px] w-96 grid-cols-6 overflow-hidden">
            {stylePresets.map((art, i) => (
              <button key={i} aria-label={`Style ${i + 1}`} className="size-16 border-b-2 border-r-2 border-[#929292]">
                <svg viewBox="0 0 62 62" className="size-[62px]">
                  {art}
                </svg>
              </button>
            ))}
            {stylePresets.slice(0, 6).map((_, i) => (
              <div key={i} className="h-16 border-r-2 border-[#929292]" />
            ))}
          </div>
        </div>
        <div className="flex w-[30px] justify-center bg-linear-to-r from-[#f0f0f0] to-white pt-[2px]">
          <div className="h-[246px] w-4 rounded-full bg-[#c1c1c1]" />
        </div>
      </div>
      <div className="mx-1 flex h-[38px] items-start justify-end pt-1">
        <svg className="mr-[42px] size-5" viewBox="0 0 20 20" fill="none" stroke="#777" strokeWidth="2">
          <circle cx="10" cy="10" r="8" />
          <path d="M4 4l12 12" />
        </svg>
        <NewIcon className="mr-9" />
        <TrashIcon className="mr-[46px]" />
      </div>
    </section>
  );
}

function RightDock() {
  return (
    <aside className="flex w-[502px] shrink-0 flex-col bg-[#646464]">
      <div className="flex h-6 items-center border-b-2 border-black bg-linear-to-b from-[#606060] to-[#3f3f3f]">
        <span className="ml-auto mr-[59px]">
          <Chevrons />
        </span>
        <Chevrons left />
      </div>
      <div className="flex flex-1">
        <div className="flex w-[436px] flex-col">
          <LayersPanel />
          <SwatchesPanel />
          <StylesPanel />
        </div>
        <div className="ml-[2px] flex h-[206px] flex-1 flex-col items-center border-2 border-r-0 border-[#e6e6e6] bg-[#d6d6d6] pl-1 pt-[5px]">
          <div className="w-full">
            <Grip />
          </div>
          <button aria-label="Histogram" className="mt-[22px]">
            <svg className="h-7 w-[34px]" viewBox="0 0 34 28">
              <path d="M1 1h32v26H1z" fill="#f4f4f4" stroke="#333" strokeWidth="2" />
              <path d="M2 26v-7l3-3 2 2 3-5 2 2 3-7 2 4 1-5 2 5 2-3 3 7 2-3 3 5 2 1v7z" fill="url(#dark)" />
            </svg>
          </button>
          <button aria-label="Info" className="mt-7">
            <svg className="size-[34px]" viewBox="0 0 34 34">
              <circle cx="17" cy="17" r="16" fill="url(#ball)" stroke="#222" />
              <text x="17" y="27" textAnchor="middle" className="fill-white font-['Liberation_Serif',serif] text-[30px] font-bold">
                i
              </text>
            </svg>
          </button>
          <button aria-label="Actions" className="mt-[30px]">
            <svg className="h-[26px] w-[34px]" viewBox="0 0 34 26">
              <path d="M1 1h32v24H1z" fill="#e8e8e8" stroke="#333" strokeWidth="2" />
              <path d="M8 4l20 9L8 22z" fill="url(#dark)" stroke="#222" />
            </svg>
          </button>
        </div>
      </div>
    </aside>
  );
}

function AnimationPanel() {
  return (
    <section className="bg-[#d6d6d6]">
      <PanelTabs tabs={["ANIMATION (FRAMES)"]} />
      <div className="mx-1 mt-[2px] border-t-2 border-[#929292]">
        <div className="flex h-[158px]">
          <div className="w-[132px] border-r-2 border-[#929292] bg-[#b4d5fe] px-[6px] pt-[6px]">
            <div className="relative flex h-[120px] items-center border-2 border-black bg-[#ededed] p-[2px] shadow-[inset_0_0_0_2px_#b4d5fe,inset_4px_4px_#8f8f8f]">
              <div className="ml-[2px] h-[70px] w-full bg-black" />
              <span className="absolute left-1 top-1 flex h-[22px] w-[18px] items-center justify-center border-b-2 border-r-2 border-[#8f8f8f] bg-[#ececec] text-[19px] text-black">1</span>
            </div>
            <button className="flex w-full items-center justify-end gap-1 pr-1 text-[18px] text-[#222]">
              0 sec. <Caret className="text-black" />
            </button>
          </div>
        </div>
        <div className="flex h-[30px] text-[18px]">
          <div className="flex w-[520px] items-center border-t-2 border-[#929292]">
            <button className="flex h-full w-[132px] items-center justify-between border-r-2 border-[#929292] pl-[18px] pr-2 text-[#999]">
              Forever <Caret className="text-[#777]" />
            </button>
            <div className="flex flex-1 items-center pl-[10px] text-[#7d7d7d]">
              <svg className="h-[18px] w-[36px]" viewBox="0 0 36 18" fill="currentColor">
                <path d="M17 0v18L0 9zM35 0v18L18 9z" />
              </svg>
              <svg className="ml-[22px] h-[18px] w-7" viewBox="0 0 28 18" fill="currentColor">
                <path d="M20 0v18L0 9zM23 0h5v18h-5z" />
              </svg>
              <svg className="ml-9 h-[18px] w-5" viewBox="0 0 20 18" fill="currentColor">
                <path d="M0 0l20 9L0 18z" />
              </svg>
              <svg className="ml-[26px] h-[18px] w-7" viewBox="0 0 28 18" fill="currentColor">
                <path d="M0 0h5v18H0zM8 0l20 9L8 18z" />
              </svg>
              <div className="ml-3 h-7 w-[2px] bg-[#929292]" />
              <svg className="ml-3 h-5 w-9" viewBox="0 0 36 20" fill="#e6e6e6" stroke="#777" strokeWidth="2">
                <circle cx="4" cy="4" r="3" />
                <circle cx="12" cy="8" r="3" />
                <circle cx="20" cy="12" r="3" stroke="#999" />
                <circle cx="28" cy="16" r="3" stroke="#bbb" />
              </svg>
              <div className="ml-2 h-7 w-[2px] bg-[#929292]" />
              <NewIcon className="ml-5" />
              <TrashIcon className="ml-[34px]" />
            </div>
          </div>
          <div className="mr-[31px] flex-1 bg-linear-to-b from-[#efefef] to-white" />
        </div>
        <div className="h-[12px]" />
      </div>
    </section>
  );
}

function Workspace() {
  return (
    <main className="flex min-w-0 flex-1 flex-col border-r-2 border-[#2b2b2b]">
      <div className="flex h-10 border-b-2 border-[#3a3a3a] bg-linear-to-b from-[#a0a0a0] to-[#868686] text-[22px]">
        {documents.map((d) => (
          <div
            key={d.name}
            className={
              d.active
                ? "flex items-center gap-4 bg-linear-to-b from-[#efefef] to-[#d2d2d2] px-4 text-[#111]"
                : "flex items-center gap-4 border-r-2 border-[#5c5c5c] pl-[18px] pr-4 text-[#1c1c1c]"
            }
          >
            <button>{d.name}</button>
            <button aria-label={`Close ${d.name}`}>
              <svg className="h-[14px] w-[14px]" viewBox="0 0 14 14" stroke="#222" strokeWidth="2">
                <path d="M1 1l12 12M13 1L1 13" />
              </svg>
            </button>
          </div>
        ))}
      </div>
      <div className="flex min-h-[1000px] flex-1">
        <div className="flex flex-1 items-center justify-center bg-[#bfbfbf] pb-[2px] pr-[2px]">
          <div className="h-[960px] w-[1440px] bg-black shadow-[0_4px_8px_rgba(0,0,0,0.5)]" />
        </div>
        <div className="w-[30px] bg-linear-to-r from-[#f4f4f4] to-white" />
      </div>
      <div className="flex h-8 border-b-2 border-t-2 border-b-[#303030] border-t-[#929292] bg-[#d6d6d6] text-[19px] leading-6 text-black">
        <input aria-label="Zoom level" defaultValue="66.67%" className="w-[122px] border-r-2 border-[#929292] bg-white text-center" />
        <div className="flex w-10 items-center justify-center border-r-2 border-[#929292]">
          <svg className="size-6" viewBox="0 0 24 24" fill="none" stroke="#777" strokeWidth="3">
            <circle cx="12" cy="12" r="10" fill="#b0b0b0" />
            <path d="M8 6h6l5 6v4H8z" fill="#ddd" stroke="#555" strokeWidth="2" />
          </svg>
        </div>
        <span className="w-[342px] text-center">Doc: 2.22M/0 bytes</span>
        <button aria-label="Status menu" className="flex w-7 items-center justify-center border-2 border-y-0 border-[#929292] bg-[#f4f4f4]">
          <svg className="h-[18px] w-[10px]" viewBox="0 0 10 18">
            <path d="M0 0l10 9L0 18z" />
          </svg>
        </button>
        <div className="flex-1 bg-linear-to-b from-[#e8e8e8] to-white" />
        <div className="w-[30px]" />
      </div>
      <AnimationPanel />
    </main>
  );
}

const fieldInput = "h-[42px] border-4 border-[#8f8f8f] border-b-[#b8b8b8] border-r-[#a8a8a8] bg-white px-1 text-[26px]";

type Channel = { id: string; label: string; value: string; unit?: string; checked?: boolean; picked?: boolean };

const hsb: Channel[] = [
  { id: "hue", label: "H:", value: "0", unit: "°", checked: true },
  { id: "saturation", label: "S:", value: "0", unit: "%" },
  { id: "brightness", label: "B:", value: "0", unit: "%" },
];
const rgb: Channel[] = [
  { id: "red", label: "R:", value: "0", picked: true },
  { id: "green", label: "G:", value: "0" },
  { id: "blue", label: "B:", value: "0" },
];
const lab: Channel[] = [
  { id: "lightness", label: "L:", value: "0" },
  { id: "lab-a", label: "a:", value: "0" },
  { id: "lab-b", label: "b:", value: "0" },
];
const cmyk: Channel[] = [
  { id: "cyan", label: "C:", value: "75" },
  { id: "magenta", label: "M:", value: "68" },
  { id: "yellow", label: "Y:", value: "67" },
  { id: "black", label: "K:", value: "90" },
];

function RadioRow({ channel, wide = false }: { channel: Channel; wide?: boolean }) {
  return (
    <div className="flex h-[42px] items-center">
      <input
        type="radio"
        name="channel"
        aria-label={`Use ${channel.id}`}
        defaultChecked={channel.checked}
        className="size-8 shrink-0 appearance-none rounded-full border-2 border-[#8c8c8c] bg-linear-to-b from-white to-[#ececec] checked:border-[#4a5f9e] checked:bg-[radial-gradient(#04162c_5px,transparent_6px),linear-gradient(#d9e9fb,#6fb3f4_50%,#b8ecff)]"
      />
      <label htmlFor={channel.id} className={wide ? "ml-[6px] w-9" : "ml-[6px] w-10"}>{channel.label}</label>
      <input
        id={channel.id}
        defaultValue={channel.value}
        className={`${fieldInput} ${wide ? "w-[92px]" : "w-[74px]"} ${channel.picked ? "bg-[linear-gradient(#b4d5fe,#b4d5fe)] bg-[length:18px_32px] bg-[position:3px_1px] bg-no-repeat" : ""}`}
      />
      {channel.unit && <span className="ml-[6px]">{channel.unit}</span>}
    </div>
  );
}

function ColorPicker() {
  return (
    <div
      role="dialog"
      aria-label="Color Picker"
      className="absolute left-[1230px] top-[992px] flex h-[727px] w-[1122px] flex-col border-[10px] border-[#b31c10] bg-[#ececec] text-[26px] text-black shadow-[0_24px_60px_rgba(0,0,0,0.6)]"
    >
      <h1 className="h-9 border-b-2 border-[#6a6a6a] bg-linear-to-b from-[#dedede] to-[#b6b6b6] text-center text-[27px] leading-7 text-[#333]">Color Picker (Foreground Color)</h1>
      <div className="flex pl-[14px] pr-4 pt-5">
        <div className="pt-10">
          <div className="flex">
            <div className="relative h-[516px] w-[518px] border-4 border-b-0 border-r-2 border-[#8f8f8f] bg-[linear-gradient(to_top,#000,transparent),linear-gradient(to_right,#fff,#fd2a30_85%,#ff2b1a)]">
              <svg className="absolute bottom-0 left-0 h-3 w-3" viewBox="0 0 12 12" fill="none" stroke="#fff" strokeWidth="2">
                <path d="M0 1q10 0 11 11" />
              </svg>
            </div>
            <svg className="mt-[506px] ml-[3px] h-[18px] w-[17px]" viewBox="0 0 17 18" fill="#fff" stroke="#777" strokeWidth="2">
              <path d="M1 2h7l8 7-8 7H1z" />
            </svg>
            <div className="ml-[2px] h-[516px] w-11 border-4 border-b-0 border-r-2 border-[#8f8f8f] bg-[linear-gradient(#ff2b1a,#fd2a3c_5%,#fd46ff_17%,#143cff_33%,#143cff_37%,#2affff_50%,#28ff2a_63%,#28ff2a_67%,#ffff33_83%,#ff2b1a_97%)]" />
            <svg className="mt-[506px] ml-[2px] h-[18px] w-[17px]" viewBox="0 0 17 18" fill="#fff" stroke="#777" strokeWidth="2">
              <path d="M16 2H9L1 9l8 7h7z" />
            </svg>
          </div>
          <label className="mt-[6px] flex items-center gap-2">
            <input type="checkbox" className="size-7 appearance-none rounded-md border-2 border-[#8c8c8c] bg-linear-to-b from-white to-[#ececec]" />
            Only Web Colors
          </label>
        </div>
        <div className="ml-[3px] flex-1">
          <div className="flex justify-between">
            <div className="ml-[2px] flex w-[124px] flex-col items-center pt-3 text-[19px]">
              <span className="leading-7">new</span>
              <div className="mb-1 mt-2 h-[138px] w-full border-2 border-b-0 border-[#8f8f8f] bg-black" />
              <span className="leading-6">current</span>
            </div>
            <div className="flex w-[266px] flex-col text-[27px] leading-9">
              <button className="h-[42px] rounded-lg border-2 border-[#56609c] bg-[linear-gradient(#d8e9fb,#a5d1fa_50%,#7cbdf8_55%,#cdf6ff)] shadow-[0_2px_2px_#bbb]">OK</button>
              <button className="mt-[14px] h-[42px] rounded-lg border-2 border-[#8f8f8f] bg-[linear-gradient(#fff,#fafafa_50%,#ebebeb_55%,#f2f2f2)] shadow-[0_2px_2px_#ccc]">Cancel</button>
              <button className="mt-7 h-[42px] rounded-lg border-2 border-[#8f8f8f] bg-[linear-gradient(#fff,#fafafa_50%,#ebebeb_55%,#f2f2f2)] shadow-[0_2px_2px_#ccc]">Add To Swatches</button>
              <button className="mt-7 h-[42px] rounded-lg border-2 border-[#8f8f8f] bg-[linear-gradient(#fff,#fafafa_50%,#ebebeb_55%,#f2f2f2)] shadow-[0_2px_2px_#ccc]">Color Libraries</button>
            </div>
          </div>
          <div className="mt-7 flex">
            <div className="w-60">
              <div className="flex flex-col gap-[10px]">
                {hsb.map((c) => <RadioRow key={c.id} channel={c} />)}
              </div>
              <div className="mt-[18px] flex flex-col gap-[10px]">
                {rgb.map((c) => <RadioRow key={c.id} channel={c} />)}
              </div>
              <div className="mt-[18px] flex items-center gap-2 pl-2">
                <label htmlFor="hex">#</label>
                <input id="hex" defaultValue="000000" className={`${fieldInput} w-36`} />
              </div>
            </div>
            <div>
              <div className="flex flex-col gap-[10px]">
                {lab.map((c) => <RadioRow key={c.id} channel={c} wide />)}
              </div>
              <div className="mt-[18px] flex flex-col gap-[10px]">
                {cmyk.map((c) => (
                  <div key={c.id} className="flex h-[42px] items-center">
                    <label htmlFor={c.id} className="mr-2 w-[70px] text-right">{c.label}</label>
                    <input id={c.id} defaultValue={c.value} className={`${fieldInput} w-[74px]`} />
                    <span className="ml-[6px]">%</span>
                  </div>
                ))}
              </div>
            </div>
          </div>
        </div>
      </div>
    </div>
  );
}

export default function App() {
  return (
    <div className="relative flex min-h-screen flex-col bg-black pb-1 font-['Noto_Sans','Liberation_Sans',sans-serif]">
      <Defs />
      <MenuBar />
      <AppBar />
      <OptionsBar />
      <div className="flex flex-1">
        <LeftDock />
        <Workspace />
        <RightDock />
      </div>
      <ColorPicker />
      {/* callout from the foreground color chip to the picker */}
      <svg className="pointer-events-none absolute left-0 top-[980px] h-[760px] w-[1250px]" viewBox="0 980 1250 760" fill="none" stroke="#b31c10">
        <path d="M68 1204h65v60H68z" strokeWidth="10" />
        <path d="M138 1207L1240 998M134 1266L1236 1714" strokeWidth="15" />
      </svg>
    </div>
  );
}
